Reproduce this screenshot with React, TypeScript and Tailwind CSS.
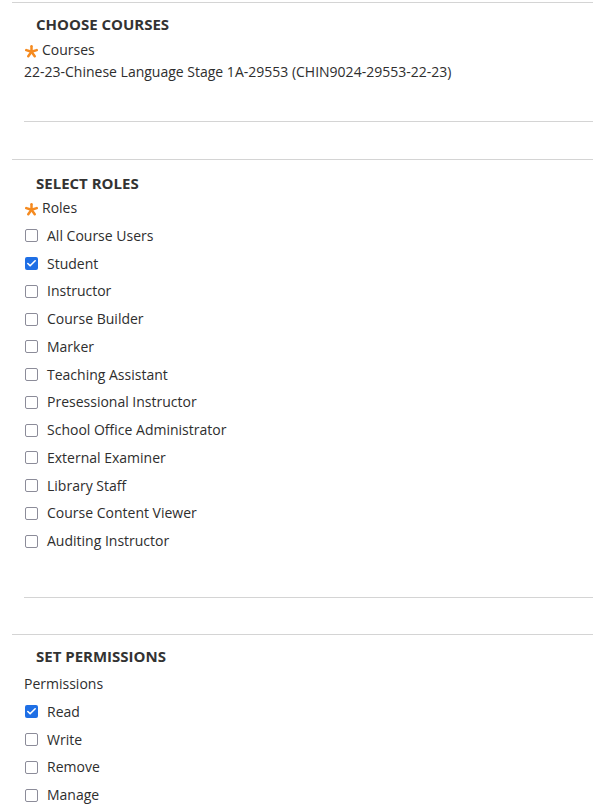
import { Check } from 'lucide-react';

const roles = [
  { label: 'All Course Users', checked: false },
  { label: 'Student', checked: true },
  { label: 'Instructor', checked: false },
  { label: 'Course Builder', checked: false },
  { label: 'Marker', checked: false },
  { label: 'Teaching Assistant', checked: false },
  { label: 'Presessional Instructor', checked: false },
  { label: 'School Office Administrator', checked: false },
  { label: 'External Examiner', checked: false },
  { label: 'Library Staff', checked: false },
  { label: 'Course Content Viewer', checked: false },
  { label: 'Auditing Instructor', checked: false },
];

const permissions = [
  { label: 'Read', checked: true },
  { label: 'Write', checked: false },
  { label: 'Remove', checked: false },
  { label: 'Manage', checked: false },
];

function RequiredStar() {
  // five-armed asterisk used for required fields
  const arms = [-90, -18, 54, 126, 198];
  return (
    <svg width="13" height="13" viewBox="0 0 13 13" className="mt-[5px] shrink-0">
      {arms.map((a) => {
        const r = (a * Math.PI) / 180;
        return (
          <line
            key={a}
            x1="6.5"
            y1="6.8"
            x2={6.5 + Math.cos(r) * 5.5}
            y2={6.8 + Math.sin(r) * 5.5}
            stroke="#f58a1f"
            strokeWidth="2.5"
            strokeLinecap="round"
          />
        );
      })}
    </svg>
  );
}

function CheckRow({ label, checked }: { label: string; checked: boolean }) {
  return (
    <label className="flex h-[27.75px] items-center">
      {checked ? (
        <span className="flex h-[13px] w-[13px] items-center justify-center rounded-[2px] bg-[#1f6fe5]">
          <Check className="h-[11px] w-[11px] text-white" strokeWidth={3.5} />
        </span>
      ) : (
        <span className="h-[13px] w-[13px] rounded-[2px] border-[1.5px] border-[#8c8c99] bg-white" />
      )}
      <span className="ml-[9px]">{label}</span>
    </label>
  );
}

export default function App() {
  return (
    <div
      className="min-h-screen bg-white pt-[2px] text-[14px] leading-[20px] text-[#2e2e2e]"
      style={{ fontFamily: '"Open Sans", "Liberation Sans", sans-serif' }}
    >
      {/* Choose courses */}
      <section className="ml-3 border-t border-[#d4d4d4]">
        <h2 className="ml-6 mt-[11px] text-[15px] font-bold uppercase text-[#333]">Choose Courses</h2>
        <div className="ml-[13px] mt-[6px] flex items-start gap-[4px]">
          <RequiredStar />
          <span>Courses</span>
        </div>
        <p className="ml-3 mt-[2px]">22-23-Chinese Language Stage 1A-29553 (CHIN9024-29553-22-23)</p>
        <div className="ml-3 mt-[39px] border-t border-[#d4d4d4]" />
      </section>

      {/* Select roles */}
      <section className="ml-3 mt-[37px] border-t border-[#d4d4d4]">
        <h2 className="ml-6 mt-[13px] text-[15px] font-bold uppercase text-[#333]">Select Roles</h2>
        <div className="ml-[13px] mt-[5px] flex items-start gap-[4px]">
          <RequiredStar />
          <span>Roles</span>
        </div>
        <div className="ml-[13px] mt-[4px]">
          {roles.map((r) => (
            <CheckRow key={r.label} label={r.label} checked={r.checked} />
          ))}
        </div>
        <div className="ml-3 mt-[42px] border-t border-[#d4d4d4]" />
      </section>

      {/* Set permissions */}
      <section className="ml-3 mt-[36px] border-t border-[#d4d4d4]">
        <h2 className="ml-6 mt-[11px] text-[15px] font-bold uppercase text-[#333]">Set Permissions</h2>
        <p className="ml-3 mt-[8px]">Permissions</p>
        <div className="ml-[13px] mt-[4px]">
          {permissions.map((p) => (
            <CheckRow key={p.label} label={p.label} checked={p.checked} />
          ))}
        </div>
      </section>
    </div>
  );
}
